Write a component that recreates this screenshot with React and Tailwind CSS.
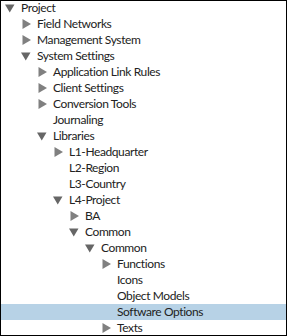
import React from 'react';

const nodes = [
  { label: 'Project', level: 0, state: 'open' },
  { label: 'Field Networks', level: 1, state: 'closed' },
  { label: 'Management System', level: 1, state: 'closed' },
  { label: 'System Settings', level: 1, state: 'open' },
  { label: 'Application Link Rules', level: 2, state: 'closed' },
  { label: 'Client Settings', level: 2, state: 'closed' },
  { label: 'Conversion Tools', level: 2, state: 'closed' },
  { label: 'Journaling', level: 2 },
  { label: 'Libraries', level: 2, state: 'open' },
  { label: 'L1-Headquarter', level: 3, state: 'closed' },
  { label: 'L2-Region', level: 3 },
  { label: 'L3-Country', level: 3 },
  { label: 'L4-Project', level: 3, state: 'open' },
  { label: 'BA', level: 4, state: 'closed' },
  { label: 'Common', level: 4, state: 'open' },
  { label: 'Common', level: 5, state: 'open' },
  { label: 'Functions', level: 6, state: 'closed' },
  { label: 'Icons', level: 6 },
  { label: 'Object Models', level: 6 },
  { label: 'Software Options', level: 6, selected: true },
  { label: 'Texts', level: 6, state: 'closed' },
];

const Arrow = ({ state }) => {
  if (state === 'open') {
    return (
      <svg width="10" height="9" viewBox="0 0 10 9" className="ml-[4px]">
        <polygon points="0,0.5 9.5,0.5 4.75,8.5" fill="#666666" />
      </svg>
    );
  }
  if (state === 'closed') {
    return (
      <svg width="10" height="10" viewBox="0 0 10 10" className="ml-[5px]">
        <polygon points="0.5,0 9,5 0.5,10" fill="#808080" />
      </svg>
    );
  }
  return null;
};

export default function App() {
  return (
    <div className="w-[287px] h-[336px] bg-white border border-black overflow-hidden">
      <div className="-mt-px">
        {nodes.map((n, i) => (
          <div
            key={i}
            className={`flex items-center h-4 ${n.selected ? 'bg-[#b7d2e6]' : ''}`}
            style={{ paddingLeft: n.level * 16 }}
          >
            <div className="w-5 h-4 flex items-center shrink-0">
              <Arrow state={n.state} />
            </div>
            <span className="text-[12px] leading-4 tracking-[-0.4px] text-[#222222] whitespace-nowrap font-['Lato',sans-serif]">
              {n.label}
            </span>
          </div>
        ))}
      </div>
    </div>
  );
}
